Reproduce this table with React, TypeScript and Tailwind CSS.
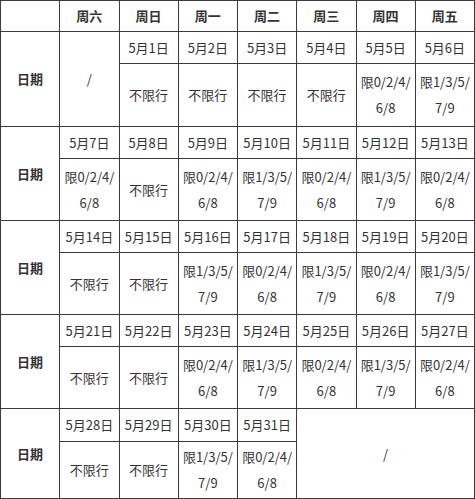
import React from "react";

type R = "n" | "a" | "b";

const cellBase =
  "border border-[#3a3a3a] text-center align-middle p-0 text-[13px] text-[#333]";

function Restr({ r }: { r: R }) {
  if (r === "n") return <span>不限行</span>;
  if (r === "a")
    return (
      <span className="block leading-[26px]">
        限0/2/4/
        <br />
        6/8
      </span>
    );
  return (
    <span className="block leading-[26px]">
      限1/3/5/
      <br />
      7/9
    </span>
  );
}

const blocks: { dates: string[]; restr: R[] }[] = [
  {
    dates: ["5月7日", "5月8日", "5月9日", "5月10日", "5月11日", "5月12日", "5月13日"],
    restr: ["a", "n", "a", "b", "a", "b", "a"],
  },
  {
    dates: ["5月14日", "5月15日", "5月16日", "5月17日", "5月18日", "5月19日", "5月20日"],
    restr: ["n", "n", "b", "a", "b", "a", "b"],
  },
  {
    dates: ["5月21日", "5月22日", "5月23日", "5月24日", "5月25日", "5月26日", "5月27日"],
    restr: ["n", "n", "a", "b", "a", "b", "a"],
  },
];

export default function App() {
  const heads = ["周六", "周日", "周一", "周二", "周三", "周四", "周五"];
  return (
    <div className="w-[475px] h-[499px] bg-white font-['Noto_Sans_CJK_SC',sans-serif] overflow-hidden">
      <table className="border-collapse table-fixed w-[474px]">
        <colgroup>
          {Array.from({ length: 8 }).map((_, i) => (
            <col key={i} className="w-[59.25px]" />
          ))}
        </colgroup>
        <tbody>
          <tr className="h-[31px]">
            <td className={cellBase}></td>
            {heads.map((h) => (
              <td key={h} className={cellBase + " font-bold text-[#222]"}>
                {h}
              </td>
            ))}
          </tr>
          {/* block 1 */}
          <tr className="h-[32px]">
            <td rowSpan={2} className={cellBase + " font-bold text-[#222]"}>
              日期
            </td>
            <td rowSpan={2} className={cellBase}>
              /
            </td>
            {["5月1日", "5月2日", "5月3日", "5月4日", "5月5日", "5月6日"].map((d) => (
              <td key={d} className={cellBase}>
                {d}
              </td>
            ))}
          </tr>
          <tr className="h-[63px]">
            {(["n", "n", "n", "n", "a", "b"] as R[]).map((r, i) => (
              <td key={i} className={cellBase}>
                <Restr r={r} />
              </td>
            ))}
          </tr>
          {blocks.map((b, bi) => (
            <React.Fragment key={bi}>
              <tr className="h-[32px]">
                <td rowSpan={2} className={cellBase + " font-bold text-[#222]"}>
                  日期
                </td>
                {b.dates.map((d) => (
                  <td key={d} className={cellBase}>
                    {d}
                  </td>
                ))}
              </tr>
              <tr className="h-[62px]">
                {b.restr.map((r, i) => (
                  <td key={i} className={cellBase}>
                    <Restr r={r} />
                  </td>
                ))}
              </tr>
            </React.Fragment>
          ))}
          {/* block 5 */}
          <tr className="h-[33px]">
            <td rowSpan={2} className={cellBase + " font-bold text-[#222]"}>
              日期
            </td>
            {["5月28日", "5月29日", "5月30日", "5月31日"].map((d) => (
              <td key={d} className={cellBase}>
                {d}
              </td>
            ))}
            <td rowSpan={2} colSpan={3} className={cellBase}>
              /
            </td>
          </tr>
          <tr className="h-[57px]">
            {(["n", "n", "b", "a"] as R[]).map((r, i) => (
              <td key={i} className={cellBase}>
                <Restr r={r} />
              </td>
            ))}
          </tr>
        </tbody>
      </table>
    </div>
  );
}
